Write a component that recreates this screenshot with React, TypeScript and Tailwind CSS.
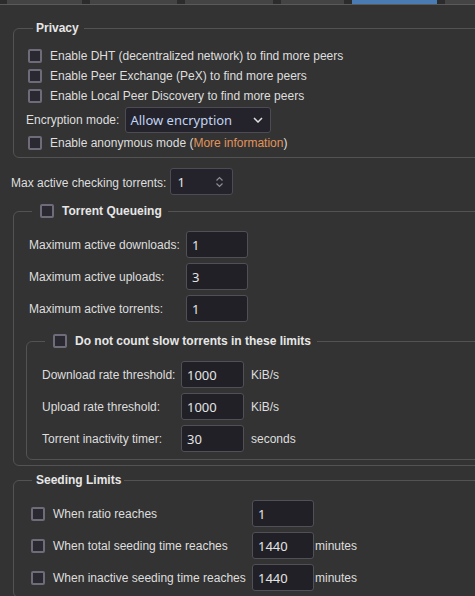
import React from "react"

const tabs = [75, 87, 88, 63, 85]

function Check() {
  return (
    <span className="inline-block w-[14px] h-[14px] shrink-0 rounded-[2px] border-2 border-[#6f6b79] bg-[#2a2931]" />
  )
}

function Field({ value, w = "w-[62px]" }: { value: string; w?: string }) {
  return (
    <div
      className={`${w} h-[27px] shrink-0 flex items-center pl-[5px] rounded-[3px] border border-[#505057] bg-[#212026] text-[13px] text-[#e4e4e4] font-['Noto_Sans',sans-serif]`}
    >
      {value}
    </div>
  )
}

function CheckRow({ label, children }: { label: string; children?: React.ReactNode }) {
  return (
    <div className="h-[20px] flex items-center gap-[8px]">
      <Check />
      <span>
        {label}
        {children}
      </span>
    </div>
  )
}

export default function App() {
  return (
    <div className="w-[475px] h-[596px] overflow-hidden bg-[#333333] text-[12px] leading-[16px] text-[#dedede] font-['Liberation_Sans',Arial,sans-serif]">
      <div className="h-[4px] flex gap-[8px] pl-[7px] bg-[#2c2c2c]">
        {tabs.map((w, i) => (
          <div
            key={i}
            style={{ width: w }}
            className={i === 4 ? "bg-[#4a7cb3]" : "bg-[#444444]"}
          />
        ))}
        <div className="flex-1 bg-[#444444]" />
      </div>
      <div className="h-px bg-[#5a5a5a]" />

      <div className="pl-[11px]">
        {/* Privacy */}
        <fieldset className="ml-[2px] -mr-6 mt-[15px] rounded-[6px] border border-[#535353]">
          <legend className="ml-[19px] pl-[3px] pr-[5px] font-bold text-[#e6e6e6]">Privacy</legend>
          <div className="pl-[14px] pt-[10px] pb-[4px]">
            <CheckRow label="Enable DHT (decentralized network) to find more peers" />
            <CheckRow label="Enable Peer Exchange (PeX) to find more peers" />
            <CheckRow label="Enable Local Peer Discovery to find more peers" />
            <div className="mt-px h-[26px] flex items-center gap-[6px] -ml-[2px]">
              <span>Encryption mode:</span>
              <div className="w-[146px] h-[26px] flex items-center justify-between pl-[4px] pr-[7px] rounded-[3px] border border-[#4d4c54] bg-[#24232b] text-[13px] text-[#c2d4f2] font-['Noto_Sans',sans-serif]">
                <span>Allow encryption</span>
                <svg width="10" height="6" viewBox="0 0 10 6" fill="none">
                  <path d="M1 1l4 4 4-4" stroke="#e0e0e0" strokeWidth="1.5" />
                </svg>
              </div>
            </div>
            <CheckRow label="Enable anonymous mode (">
              <span className="text-[#e2935c]">More information</span>)
            </CheckRow>
          </div>
        </fieldset>

        <div className="mt-[10px] flex items-center gap-[4px]">
          <span className="pt-[2px]">Max active checking torrents:</span>
          <div className="w-[63px] h-[27px] flex items-center justify-between pl-[6px] pr-[8px] rounded-[3px] border border-[#4d4c54] bg-[#24232b] text-[13px] text-[#e4e4e4] font-['Noto_Sans',sans-serif]">
            <span>1</span>
            <svg width="9" height="12" viewBox="0 0 9 12" fill="none">
              <path d="M1.5 4.5l3-3 3 3M1.5 7.5l3 3 3-3" stroke="#8e8c96" strokeWidth="1.2" />
            </svg>
          </div>
        </div>

        {/* Torrent Queueing */}
        <fieldset className="ml-[2px] -mr-6 mt-[8px] rounded-[6px] border border-[#535353]">
          <legend className="ml-[18px] pl-[8px] pr-[6px] font-bold text-[#e6e6e6]">
            <span className="flex items-center gap-[8px]">
              <Check />
              Torrent Queueing
            </span>
          </legend>
          <div className="pl-[15px] pt-[12px] pb-[5px]">
            <div className="flex flex-col gap-[5px]">
              {[
                ["Maximum active downloads:", "1"],
                ["Maximum active uploads:", "3"],
                ["Maximum active torrents:", "1"],
              ].map(([l, v]) => (
                <div key={l} className="flex items-center">
                  <span className="w-[157px] shrink-0">{l}</span>
                  <Field value={v} />
                </div>
              ))}
            </div>

            <fieldset className="-ml-[3px] mt-[11px] rounded-[6px] border border-[#535353]">
              <legend className="ml-[18px] pl-[8px] pr-[6px] font-bold text-[#e6e6e6]">
                <span className="flex items-center gap-[8px]">
                  <Check />
                  Do not count slow torrents in these limits
                </span>
              </legend>
              <div className="pl-[15px] pt-[12px] pb-[7px] flex flex-col gap-[5px]">
                {[
                  ["Download rate threshold:", "1000", "KiB/s"],
                  ["Upload rate threshold:", "1000", "KiB/s"],
                  ["Torrent inactivity timer:", "30", "seconds"],
                ].map(([l, v, u]) => (
                  <div key={l} className="flex items-center">
                    <span className="w-[139px] shrink-0">{l}</span>
                    <Field value={v} w="w-[63px]" />
                    <span className="ml-[7px]">{u}</span>
                  </div>
                ))}
              </div>
            </fieldset>
          </div>
        </fieldset>

        {/* Seeding Limits */}
        <fieldset className="ml-[2px] -mr-6 mt-[6px] rounded-[6px] border border-[#535353]">
          <legend className="ml-[18px] pl-[4px] pr-[3px] font-bold text-[#e6e6e6]">Seeding Limits</legend>
          <div className="pl-[17px] pt-[12px] pb-[6px] flex flex-col gap-[5px]">
            {[
              ["When ratio reaches", "1", ""],
              ["When total seeding time reaches", "1440", "minutes"],
              ["When inactive seeding time reaches", "1440", "minutes"],
            ].map(([l, v, u]) => (
              <div key={l} className="flex items-center">
                <div className="w-[221px] shrink-0 flex items-center gap-[8px]">
                  <Check />
                  <span className="whitespace-nowrap">{l}</span>
                </div>
                <Field value={v} />
                {u && <span className="ml-px">{u}</span>}
              </div>
            ))}
          </div>
        </fieldset>
      </div>
    </div>
  )
}
